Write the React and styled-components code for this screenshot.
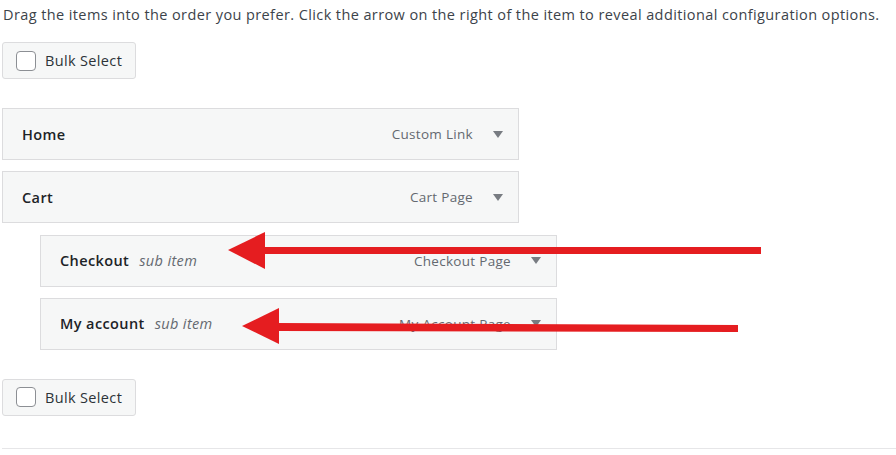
import React from "react";
import styled, { createGlobalStyle } from "styled-components";

const GlobalStyle = createGlobalStyle`
body {
  margin: 0;
  background: #ffffff;
  font-family: "Open Sans", "Noto Sans", sans-serif;
}
`;

const Page = styled.div`
position: relative;
width: 896px;
height: 455px;
overflow: hidden;
padding-left: 2px;
box-sizing: border-box;
`;

const Intro = styled.p`
margin: 0;
padding: 4px 0 0 1px;
font-size: 14.5px;
letter-spacing: 0.4px;
line-height: 22px;
color: #3c434a;
white-space: nowrap;
`;

const BulkButton = styled.label`
display: flex;
align-items: center;
gap: 9px;
width: 134px;
height: 37px;
box-sizing: border-box;
margin-top: ${(p) => p.top}px;
padding-left: 13px;
border: 1px solid #dcdcde;
border-radius: 3px;
background: #f6f7f7;
font-size: 14.5px;
letter-spacing: 0.35px;
color: #2c3338;
`;

const Checkbox = styled.span`
width: 20px;
height: 20px;
box-sizing: border-box;
border: 1px solid #8c8f94;
border-radius: 4px;
background: #ffffff;
`;

const MenuList = styled.div`
display: flex;
flex-direction: column;
gap: 11.3px;
margin-top: 29px;
`;

const MenuItem = styled.div`
display: flex;
align-items: center;
width: 517px;
height: 52px;
box-sizing: border-box;
margin-left: ${(p) => (p.depth ? 38 : 0)}px;
padding: 0 15px 0 19px;
border: 1px solid #dcdcde;
background: #f6f7f7;
`;

const ItemTitle = styled.span`
font-size: 14.5px;
letter-spacing: 0.4px;
font-weight: 600;
color: #1d2327;
`;

const SubLabel = styled.span`
margin-left: 10px;
font-size: 14.5px;
letter-spacing: 0.35px;
font-style: italic;
color: #646970;
`;

const ItemType = styled.span`
margin-left: auto;
font-size: 13.5px;
letter-spacing: 0.3px;
color: #646970;
`;

const Toggle = styled.span`
width: 0;
height: 0;
margin-left: 20px;
border-left: 5px solid transparent;
border-right: 5px solid transparent;
border-top: 7px solid #787c82;
`;

const Divider = styled.div`
margin-top: 32px;
height: 1px;
background: #e6e6e8;
`;

const Overlay = styled.svg`
position: absolute;
left: 0;
top: 0;
pointer-events: none;
`;

const items = [
  { title: "Home", type: "Custom Link" },
  { title: "Cart", type: "Cart Page" },
  { title: "Checkout", type: "Checkout Page", depth: 1 },
  { title: "My account", type: "My Account Page", depth: 1 },
];

function Bulk({ top }) {
  return (
    <BulkButton top={top}>
      <Checkbox />
      Bulk Select
    </BulkButton>
  );
}

export default function App() {
  return (
    <Page>
      <GlobalStyle />
      <Intro>
        Drag the items into the order you prefer. Click the arrow on the right of the item to reveal additional configuration options.
      </Intro>
      <Bulk top={16} />
      <MenuList>
        {items.map((item) => (
          <MenuItem key={item.title} depth={item.depth}>
            <ItemTitle>{item.title}</ItemTitle>
            {item.depth ? <SubLabel>sub item</SubLabel> : null}
            <ItemType>{item.type}</ItemType>
            <Toggle />
          </MenuItem>
        ))}
      </MenuList>
      <Bulk top={29} />
      <Divider />
      <Overlay width="896" height="455">
        <path d="M262 247 L761 247 L761 254 L262 254 Z" fill="#e51d20" />
        <path d="M228 250 L265 232 L265 269 Z" fill="#e51d20" />
        <path d="M276 323 L738 325 L738 332 L276 331 Z" fill="#e51d20" />
        <path d="M242 326 L279 308 L279 344 Z" fill="#e51d20" />
      </Overlay>
    </Page>
  );
}
